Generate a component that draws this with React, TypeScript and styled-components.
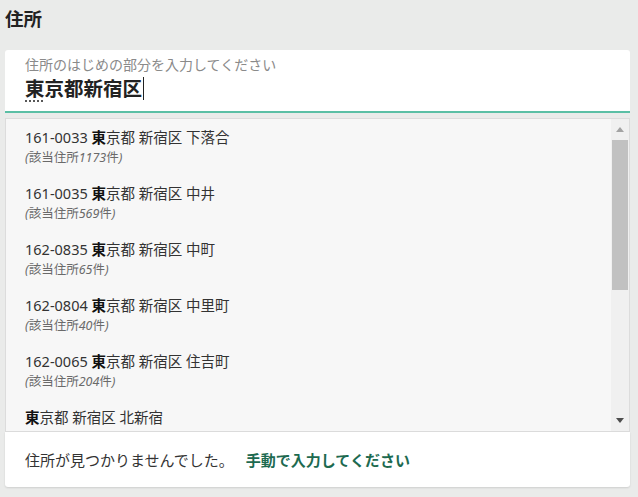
import React from "react";
import styled, { createGlobalStyle } from "styled-components";

const Global = createGlobalStyle`
  html, body { margin: 0; padding: 0; background: #eaebea; }
  body { font-family: "Noto Sans", "Noto Sans CJK JP", sans-serif; color: #222; }
`;

const Page = styled.div`
  width: 638px;
  height: 497px;
  box-sizing: border-box;
  padding: 6px 8px 0 5px;
  display: flex;
  flex-direction: column;
`;

const Title = styled.h2`
  margin: 0;
  font-size: 18.5px;
  line-height: 24px;
  font-weight: 700;
  color: #222;
  font-family: "Noto Sans CJK JP", sans-serif;
`;

const InputBox = styled.div`
  margin-top: 20px;
  height: 63px;
  box-sizing: border-box;
  background: #fff;
  border-radius: 3px 3px 0 0;
  border-bottom: 2px solid #5bbfa5;
  padding: 5px 20px 0;
  display: flex;
  flex-direction: column;
`;

const Label = styled.div`
  font-family: "Noto Sans CJK JP", sans-serif;
  font-size: 14px;
  line-height: 19px;
  color: #8a8a8a;
`;

const Value = styled.div`
  font-family: "Noto Sans CJK JP", sans-serif;
  font-size: 19.5px;
  line-height: 28px;
  font-weight: 700;
  color: #222;
  display: flex;
  align-items: center;
`;

const Composing = styled.span`
  text-decoration: underline dotted #555;
  text-underline-offset: 5px;
`;

const Caret = styled.span`
  display: inline-block;
  width: 1px;
  height: 23px;
  background: #222;
  margin-left: 1px;
`;

const List = styled.div`
  margin-top: 5px;
  height: 314px;
  box-sizing: border-box;
  background: #f7f7f7;
  border: 1px solid #dcdcdc;
  display: flex;
  overflow: hidden;
`;

const Items = styled.div`
  flex: 1;
  min-width: 0;
  overflow: hidden;
`;

const Scrollbar = styled.div`
  width: 18px;
  flex: none;
  background: #f0f0f0;
  display: flex;
  flex-direction: column;
`;

const ArrowButton = styled.div`
  height: 21px;
  flex: none;
  display: flex;
  align-items: center;
  justify-content: center;
`;

const Triangle = styled.span<{ $dir: "up" | "down" }>`
  width: 0;
  height: 0;
  border-left: 4.5px solid transparent;
  border-right: 4.5px solid transparent;
  ${(p) =>
    p.$dir === "up"
      ? "border-bottom: 5px solid #a3a3a3;"
      : "border-top: 5px solid #4d4d4d;"}
`;

const Track = styled.div`
  flex: 1;
  padding: 0 1px;
`;

const Thumb = styled.div`
  height: 150px;
  background: #c1c1c1;
`;

const Item = styled.div`
  padding: 7px 20px 9px 19px;
  display: flex;
  flex-direction: column;
  gap: 2px;
`;

const Main = styled.div`
  font-size: 14.5px;
  line-height: 22px;
  color: #333;
  font-family: "Noto Sans", "Noto Sans CJK JP", sans-serif;
  white-space: nowrap;
`;

const Hit = styled.b`
  font-weight: 700;
  color: #111;
`;

const Sub = styled.div`
  font-size: 12.5px;
  line-height: 16px;
  color: #6a6a6a;
  font-family: "Noto Sans", "Noto Sans CJK JP", sans-serif;
  i { font-style: italic; }
`;

const Footer = styled.div`
  height: 55px;
  box-sizing: border-box;
  background: #fff;
  border-radius: 0 0 3px 3px;
  box-shadow: 0 1px 2px rgba(0, 0, 0, 0.12);
  padding: 0 20px;
  display: flex;
  align-items: center;
  gap: 12px;
  font-family: "Noto Sans CJK JP", sans-serif;
  font-size: 15px;
`;

const Message = styled.span`
  color: #333;
`;

const Link = styled.a`
  color: #1d6a50;
  font-weight: 700;
  text-decoration: none;
  cursor: pointer;
`;

type Entry = { zip?: string; town: string; count?: number };

const entries: Entry[] = [
  { zip: "161-0033", town: "下落合", count: 1173 },
  { zip: "161-0035", town: "中井", count: 569 },
  { zip: "162-0835", town: "中町", count: 65 },
  { zip: "162-0804", town: "中里町", count: 40 },
  { zip: "162-0065", town: "住吉町", count: 204 },
  { town: "北新宿", count: 1032 },
];

export default function App() {
  return (
    <Page>
      <Global />
      <Title>住所</Title>
      <InputBox>
        <Label>住所のはじめの部分を入力してください</Label>
        <Value>
          <span>
            <Composing>東</Composing>京都新宿区
          </span>
          <Caret />
        </Value>
      </InputBox>
      <List>
        <Items>
          {entries.map((e, i) => (
            <Item key={i}>
              <Main>
                {e.zip ? `${e.zip} ` : ""}
                <Hit>東</Hit>京都 新宿区 {e.town}
              </Main>
              <Sub>
                <i>(</i>該当住所<i>{e.count}</i>件<i>)</i>
              </Sub>
            </Item>
          ))}
        </Items>
        <Scrollbar>
          <ArrowButton>
            <Triangle $dir="up" />
          </ArrowButton>
          <Track>
            <Thumb />
          </Track>
          <ArrowButton>
            <Triangle $dir="down" />
          </ArrowButton>
        </Scrollbar>
      </List>
      <Footer>
        <Message>住所が見つかりませんでした。</Message>
        <Link>手動で入力してください</Link>
      </Footer>
    </Page>
  );
}
